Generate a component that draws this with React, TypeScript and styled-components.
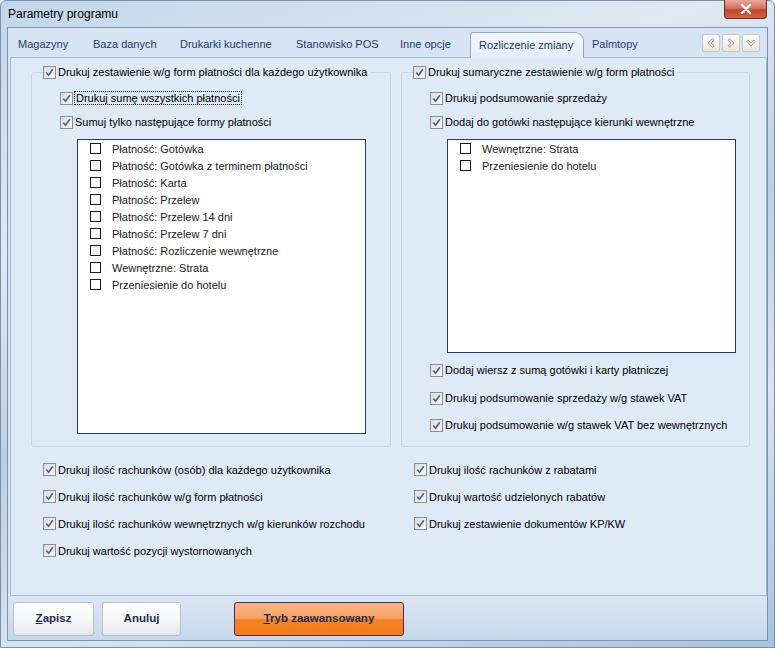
import React from 'react'
import styled, { createGlobalStyle } from 'styled-components'

const GlobalStyle = createGlobalStyle`
  html, body {
    margin: 0;
    padding: 0;
  }
  body {
    font-family: "Liberation Sans", Arial, sans-serif;
    font-size: 11px;
    color: #000;
  }
`;

const Window = styled.div`
  width: 775px;
  height: 648px;
  box-sizing: border-box;
  display: flex;
  flex-direction: column;
  padding: 0 6px 6px 6px;
  border: 1px solid #7a91ab;
  border-radius: 6px 6px 0 0;
  background: linear-gradient(160deg, #c2d6ea 0%, #dfe9f4 28%, #bccfe3 50%, #d8e4f1 72%, #a8c2dd 100%);
`;

const TitleBar = styled.div`
  height: 26px;
  display: flex;
  align-items: flex-start;
`;

const Title = styled.span`
  padding: 6px 0 0 1px;
  font-size: 12px;
  color: #000;
`;

const CloseButton = styled.button`
  margin: -1px 1px 0 auto;
  width: 43px;
  height: 19px;
  padding: 0;
  border: 1px solid #6d2b20;
  border-top: none;
  border-radius: 0 0 4px 4px;
  background: linear-gradient(#e9aa9a, #d6745f 45%, #c1442c 55%, #d0634a);
  display: flex;
  align-items: center;
  justify-content: center;
`;

const Client = styled.div`
  flex: 1;
  display: flex;
  flex-direction: column;
  border: 1px solid #7b93b0;
  background: #d6e4f3;
`;

const TabStrip = styled.div`
  height: 29px;
  display: flex;
  align-items: flex-end;
  padding-left: 2px;
`;

const Tab = styled.div<{ $w: number; $active?: boolean }>`
  width: ${p => p.$w}px;
  height: ${p => (p.$active ? 26 : 25)}px;
  box-sizing: border-box;
  padding: 0 0 1px 8px;
  display: flex;
  align-items: center;
  font-size: 11px;
  color: #1f3c69;
  white-space: nowrap;
  ${p => p.$active && `
    position: relative;
    z-index: 1;
    margin-bottom: -1px;
    border: 1px solid #93aac6;
    border-bottom: none;
    border-radius: 3px 9px 0 0;
    background: linear-gradient(#f4f8fd, #e2ecf8);
  `}
`;

const NavGroup = styled.div`
  margin: 0 7px 0 auto;
  align-self: flex-start;
  padding-top: 6px;
  display: flex;
  gap: 2px;
`;

const NavButton = styled.div`
  width: 18px;
  height: 18px;
  box-sizing: border-box;
  border: 1px solid #bfc8d3;
  border-radius: 2px;
  background: linear-gradient(#fdfdfa, #ece7d9);
  display: flex;
  align-items: center;
  justify-content: center;
`;

const Page = styled.div`
  flex: 1;
  margin-left: 2px;
  border: 1px solid #a3b8d1;
  background: #dfeaf7;
  padding: 7px 15px 0 20px;
`;

const GroupRow = styled.div`
  display: grid;
  grid-template-columns: 360px 349px;
  column-gap: 10px;
`;

const Group = styled.fieldset`
  margin: 0;
  min-width: 0;
  padding: 7px 0 8px 0;
  border: 1px solid #c8d5e4;
  border-radius: 3px;
`;

const Legend = styled.legend`
  margin-left: 11px;
  padding: 0 3px 0 0;
  line-height: 14px;
`;

const Check = styled.label<{ $h?: number; $indent?: number }>`
  height: ${p => p.$h ?? 24}px;
  padding-left: ${p => p.$indent ?? 0}px;
  display: flex;
  align-items: center;
  gap: 2px;
  white-space: nowrap;
`;

const Box = styled.span`
  width: 13px;
  height: 13px;
  box-sizing: border-box;
  flex: none;
  border: 1px solid #8e8f8f;
  background: linear-gradient(135deg, #dcdcdc, #f8f8f8);
  display: flex;
  align-items: center;
  justify-content: center;
`;

const Focused = styled.span`
  outline: 1px dotted #000;
  outline-offset: 0;
  padding: 0 1px;
`;

const ListBox = styled.div<{ $h: number; $mb?: number }>`
  width: 289px;
  height: ${p => p.$h}px;
  box-sizing: border-box;
  margin: 5px 0 ${p => p.$mb ?? 0}px 45px;
  border: 1px solid #1d3b6d;
  background: #fff;
`;

const ListItem = styled.div`
  height: 17px;
  padding-left: 12px;
  display: flex;
  align-items: center;
  gap: 11px;
  color: #222;
`;

const SmallBox = styled.span`
  width: 11px;
  height: 11px;
  box-sizing: border-box;
  border: 1px solid #1a1a1a;
  background: #fff;
`;

const BottomGrid = styled.div`
  margin: 9px 0 0 12px;
  display: grid;
  grid-template-columns: 371px 1fr;
  grid-template-rows: repeat(4, 27px);
  grid-auto-flow: column;
`;

const Footer = styled.div`
  height: 44px;
  box-sizing: border-box;
  padding: 6px 0 0 5px;
  display: flex;
  align-items: flex-start;
  gap: 8px;
  background: linear-gradient(#dbe7f4, #c6d8eb);
`;

const Button = styled.button<{ $w: number; $primary?: boolean; $gapBefore?: number }>`
  width: ${p => p.$w}px;
  height: 34px;
  margin-left: ${p => p.$gapBefore ?? 0}px;
  padding: 0 0 3px 0;
  border: 1px solid ${p => (p.$primary ? '#4a2a5e' : '#b7c1cd')};
  border-radius: 3px;
  background: ${p => (p.$primary
    ? 'linear-gradient(#f9b883, #f7a062 48%, #f5841f 52%, #f47c1a)'
    : 'linear-gradient(#ffffff, #f7f8fa 50%, #e4e7eb)')};
  font-family: "Liberation Sans", Arial, sans-serif;
  font-size: 11.5px;
  font-weight: bold;
  color: #1e2b4f;
`;

const CheckMark = () => (
  <svg width="9" height="9" viewBox="0 0 9 9">
    <path d="M1.3 4.6 L3.6 7.2 L7.8 1.3" fill="none" stroke="#4a6593" strokeWidth="1.7" />
  </svg>
);

const Checked = ({ children, h, indent }: { children: React.ReactNode; h?: number; indent?: number }) => (
  <Check $h={h} $indent={indent}>
    <Box><CheckMark /></Box>
    {children}
  </Check>
);

const tabs = [
  { label: 'Magazyny', w: 75 },
  { label: 'Baza danych', w: 87 },
  { label: 'Drukarki kuchenne', w: 116 },
  { label: 'Stanowisko POS', w: 104 },
  { label: 'Inne opcje', w: 78 },
  { label: 'Rozliczenie zmiany', w: 114, active: true },
  { label: 'Palmtopy', w: 80 },
];

const payments = [
  'Płatność: Gotówka',
  'Płatność: Gotówka z terminem płatności',
  'Płatność: Karta',
  'Płatność: Przelew',
  'Płatność: Przelew 14 dni',
  'Płatność: Przelew 7 dni',
  'Płatność: Rozliczenie wewnętrzne',
  'Wewnętrzne: Strata',
  'Przeniesienie do hotelu',
];

const internal = ['Wewnętrzne: Strata', 'Przeniesienie do hotelu'];

const bottomChecks = [
  'Drukuj ilość rachunków (osób) dla każdego użytkownika',
  'Drukuj ilość rachunków w/g form płatności',
  'Drukuj ilość rachunków wewnętrznych w/g kierunków rozchodu',
  'Drukuj wartość pozycji wystornowanych',
  'Drukuj ilość rachunków z rabatami',
  'Drukuj wartość udzielonych rabatów',
  'Drukuj zestawienie dokumentów KP/KW',
];

const App = () => {
  return (
    <>
      <GlobalStyle />
      <Window>
        <TitleBar>
          <Title>Parametry programu</Title>
          <CloseButton>
            <svg width="12" height="10" viewBox="0 0 12 10">
              <path d="M2 1 L10 9 M10 1 L2 9" stroke="#fff" strokeWidth="2.4" strokeLinecap="round" />
            </svg>
          </CloseButton>
        </TitleBar>
        <Client>
          <TabStrip>
            {tabs.map(t => (
              <Tab key={t.label} $w={t.w} $active={t.active}>{t.label}</Tab>
            ))}
            <NavGroup>
              <NavButton>
                <svg width="10" height="10" viewBox="0 0 10 10">
                  <path d="M6.5 0.8 L2.2 5 L6.5 9.2 L8 7.8 L5.2 5 L8 2.2 Z" fill="none" stroke="#8a8a8a" strokeWidth="0.9" />
                </svg>
              </NavButton>
              <NavButton>
                <svg width="10" height="10" viewBox="0 0 10 10">
                  <path d="M3.5 0.8 L7.8 5 L3.5 9.2 L2 7.8 L4.8 5 L2 2.2 Z" fill="none" stroke="#8a8a8a" strokeWidth="0.9" />
                </svg>
              </NavButton>
              <NavButton>
                <svg width="10" height="10" viewBox="0 0 10 10">
                  <path d="M0.8 3.5 L5 7.8 L9.2 3.5 L7.8 2 L5 4.8 L2.2 2 Z" fill="none" stroke="#8a8a8a" strokeWidth="0.9" />
                </svg>
              </NavButton>
            </NavGroup>
          </TabStrip>
          <Page>
            <GroupRow>
              <Group>
                <Legend>
                  <Checked h={14}>Drukuj zestawienie w/g form płatności dla każdego użytkownika</Checked>
                </Legend>
                <Checked indent={28}><Focused>Drukuj sumę wszystkich płatności</Focused></Checked>
                <Checked indent={28}>Sumuj tylko następujące formy płatności</Checked>
                <ListBox $h={295}>
                  {payments.map(p => (
                    <ListItem key={p}><SmallBox />{p}</ListItem>
                  ))}
                </ListBox>
              </Group>
              <Group>
                <Legend>
                  <Checked h={14}>Drukuj sumaryczne zestawienie w/g form płatności</Checked>
                </Legend>
                <Checked indent={28}>Drukuj podsumowanie sprzedaży</Checked>
                <Checked indent={28}>Dodaj do gotówki następujące kierunki wewnętrzne</Checked>
                <ListBox $h={214} $mb={3}>
                  {internal.map(p => (
                    <ListItem key={p}><SmallBox />{p}</ListItem>
                  ))}
                </ListBox>
                <Checked indent={28} h={28}>Dodaj wiersz z sumą gotówki i karty płatniczej</Checked>
                <Checked indent={28} h={28}>Drukuj podsumowanie sprzedaży w/g stawek VAT</Checked>
                <Checked indent={28} h={26}>Drukuj podsumowanie w/g stawek VAT bez wewnętrznych</Checked>
              </Group>
            </GroupRow>
            <BottomGrid>
              {bottomChecks.map(c => (
                <Checked key={c} h={27}>{c}</Checked>
              ))}
            </BottomGrid>
          </Page>
          <Footer>
            <Button $w={81}><u>Z</u>apisz</Button>
            <Button $w={79}>Anuluj</Button>
            <Button $w={170} $primary $gapBefore={45}><u>T</u>ryb zaawansowany</Button>
          </Footer>
        </Client>
      </Window>
    </>
  )
}

export default App
